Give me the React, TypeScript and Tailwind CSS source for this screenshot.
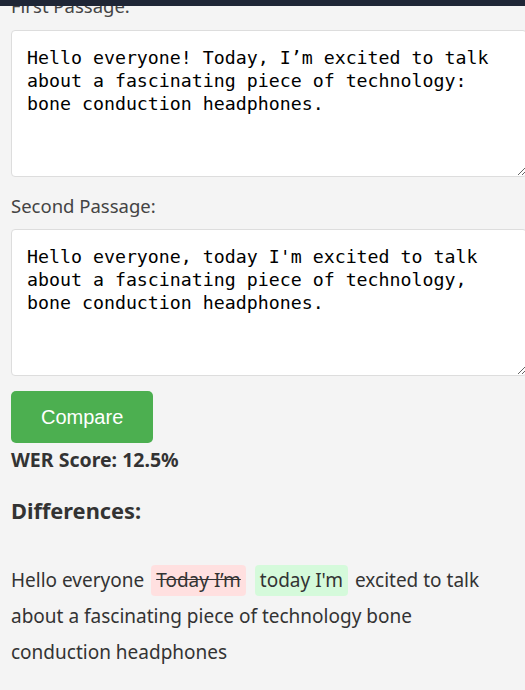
import { useState } from "react";

const first =
  "Hello everyone! Today, I\u2019m excited to talk about a fascinating piece of technology: bone conduction headphones.";
const second =
  "Hello everyone, today I'm excited to talk about a fascinating piece of technology, bone conduction headphones.";

export default function App() {
  const [a, setA] = useState(first);
  const [b, setB] = useState(second);

  return (
    <div className="relative w-[525px] h-[690px] overflow-hidden bg-[#f4f4f4] font-['Noto_Sans',sans-serif] text-[#333]">
      {/* header bar scrolled away, only its bottom edge shows */}
      <div className="absolute top-0 left-0 right-0 h-[6px] bg-[#1f2636] z-10" />

      <div className="pl-[11px]">
        <label className="block -mt-[6px] h-[24px] leading-[24px] text-[18.5px] text-[#444]">First Passage:</label>
        <textarea
          value={a}
          onChange={(e) => setA(e.target.value)}
          className="block mt-[12px] w-[516px] h-[147px] px-[15px] pt-[15px] pb-[13px] bg-white border border-[#ddd] rounded-[4px] font-['DejaVu_Sans_Mono',monospace] text-[18.25px] leading-[23px] text-black resize-y outline-none"
        />

        <label className="block mt-[17px] h-[24px] leading-[24px] text-[18.5px] text-[#444]">Second Passage:</label>
        <textarea
          value={b}
          onChange={(e) => setB(e.target.value)}
          className="block mt-[11px] w-[516px] h-[147px] px-[15px] pt-[15px] pb-[13px] bg-white border border-[#ddd] rounded-[4px] font-['DejaVu_Sans_Mono',monospace] text-[18.25px] leading-[23px] text-black resize-y outline-none"
        />

        <button className="block mt-[15px] h-[52px] px-[30px] bg-[#4caf50] rounded-[5px] text-white text-[20px] font-['Liberation_Sans',Arial,sans-serif]">
          Compare
        </button>

        <p className="mt-[5px] text-[19.5px] leading-[24px] font-bold text-[#333]">WER Score: 12.5%</p>

        <h3 className="mt-[25px] text-[21.8px] leading-[28px] font-bold text-[#333]">Differences:</h3>

        <p className="mt-[37px] w-[490px] text-[19px] leading-[36px] text-[#333]">
          Hello everyone{" "}
          <span className="inline-block bg-[#ffe0e0] line-through rounded-[4px] px-[5px] py-[4px] leading-[23px] mx-[2px]">Today I’m</span>{" "}
          <span className="inline-block bg-[#d5fadb] rounded-[4px] px-[5px] py-[4px] leading-[23px] mx-[2px]">today I'm</span>{" "}
          excited to talk about a fascinating piece of technology bone conduction headphones
        </p>
      </div>
    </div>
  );
}
